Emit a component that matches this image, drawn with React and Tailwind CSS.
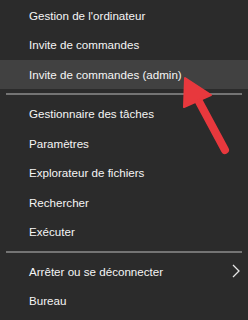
import React from 'react';

const Item = ({ label, active, arrow, h = 'h-[29.5px]' }) => (
    <div className={`flex items-center justify-between pl-[29px] pr-[8px] ${h} ${active ? 'bg-[#414141]' : ''}`}>
        <span className="text-[11.6px] text-[#f5f5f5]">{label}</span>
        {arrow && (
            <svg width="8" height="14" viewBox="0 0 8 14">
                <polyline points="1,1 7,7 1,13" fill="none" stroke="#e6e6e6" strokeWidth="1.3" />
            </svg>
        )}
    </div>
);

const Separator = () => (
    <div className="flex items-center h-[10px] px-[6px]">
        <div className="h-[2px] w-full bg-[#747474]" />
    </div>
);

export default function App() {
    return (
        <div className="relative w-[248px] h-[320px] overflow-hidden bg-[#2b2b2b]" style={{ fontFamily: '"Segoe UI", "Liberation Sans", Arial, sans-serif' }}>
            <div className="flex flex-col pt-[0.5px]">
                <Item label="Gestion de l'ordinateur" />
                <Item label="Invite de commandes" />
                <Item label="Invite de commandes (admin)" active />
                <Separator />
                <Item label="Gestionnaire des tâches" />
                <Item label="Paramètres" />
                <Item label="Explorateur de fichiers" />
                <Item label="Rechercher" />
                <Item label="Exécuter" />
                <Separator />
                <Item label="Arrêter ou se déconnecter" arrow />
                <Item label="Bureau" />
            </div>

            {/* red arrow pointing at the admin entry */}
            <svg className="absolute left-0 top-0" width="248" height="320" viewBox="0 0 248 320">
                <g fill="#e8383d" stroke="#e8383d">
                    <line x1="225" y1="150" x2="196" y2="96" strokeWidth="8" strokeLinecap="round" />
                    <polygon points="185,78 211,95 184,107" strokeWidth="2" strokeLinejoin="round" />
                </g>
            </svg>
        </div>
    );
}
